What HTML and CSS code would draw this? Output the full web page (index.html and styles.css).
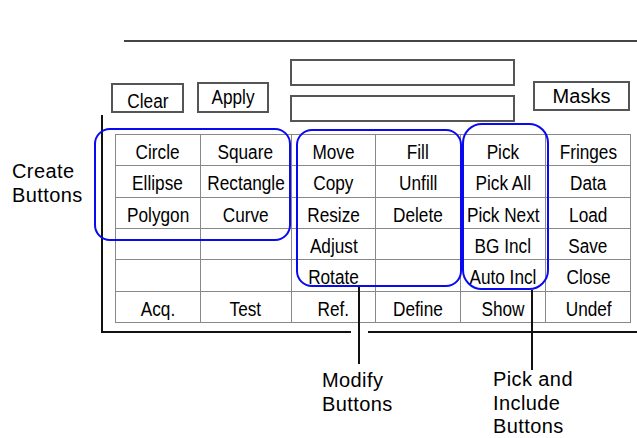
FILE: index.html
```html
<!DOCTYPE html>
<html>

<head>
    <meta charset="UTF-8">
    <title>Mask Editor Buttons</title>
    <link rel="stylesheet" href="styles.css">
</head>

<body>
    <div id="page">
        <div class="rule"></div>

        <div class="controls">
            <div class="btn btnClear"><span class="narrow">Clear</span></div>
            <div class="btn btnApply"><span class="narrow">Apply</span></div>
            <div class="fields">
                <div class="field"></div>
                <div class="field"></div>
            </div>
            <div class="btn btnMasks">Masks</div>
        </div>

        <div class="frame">
            <div class="buttonGrid">
                <div class="cell"><span class="narrow">Circle</span></div>
                <div class="cell"><span class="narrow">Square</span></div>
                <div class="cell"><span class="narrow">Move</span></div>
                <div class="cell"><span class="narrow">Fill</span></div>
                <div class="cell"><span class="narrow">Pick</span></div>
                <div class="cell"><span class="narrow">Fringes</span></div>

                <div class="cell"><span class="narrow">Ellipse</span></div>
                <div class="cell"><span class="narrow">Rectangle</span></div>
                <div class="cell"><span class="narrow">Copy</span></div>
                <div class="cell"><span class="narrow">Unfill</span></div>
                <div class="cell"><span class="narrow">Pick All</span></div>
                <div class="cell"><span class="narrow">Data</span></div>

                <div class="cell"><span class="narrow">Polygon</span></div>
                <div class="cell"><span class="narrow">Curve</span></div>
                <div class="cell"><span class="narrow">Resize</span></div>
                <div class="cell"><span class="narrow">Delete</span></div>
                <div class="cell"><span class="narrow">Pick Next</span></div>
                <div class="cell"><span class="narrow">Load</span></div>

                <div class="cell"></div>
                <div class="cell"></div>
                <div class="cell"><span class="narrow">Adjust</span></div>
                <div class="cell"></div>
                <div class="cell"><span class="narrow">BG Incl</span></div>
                <div class="cell"><span class="narrow">Save</span></div>

                <div class="cell"></div>
                <div class="cell"></div>
                <div class="cell"><span class="narrow">Rotate</span></div>
                <div class="cell"></div>
                <div class="cell"><span class="narrow">Auto Incl</span></div>
                <div class="cell"><span class="narrow">Close</span></div>

                <div class="cell"><span class="narrow">Acq.</span></div>
                <div class="cell"><span class="narrow">Test</span></div>
                <div class="cell"><span class="narrow">Ref.</span></div>
                <div class="cell"><span class="narrow">Define</span></div>
                <div class="cell"><span class="narrow">Show</span></div>
                <div class="cell"><span class="narrow">Undef</span></div>
            </div>
        </div>

        <!-- annotations drawn over the panel -->
        <div class="group groupCreate"></div>
        <div class="group groupModify"></div>
        <div class="group groupPick"></div>

        <div class="frameGap"></div>
        <div class="leader leaderModify"></div>
        <div class="leader leaderPick"></div>

        <div class="label labelCreate">Create<br>Buttons</div>
        <div class="label labelModify">Modify<br>Buttons</div>
        <div class="label labelPick">Pick and<br>Include<br>Buttons</div>
    </div>
</body>

</html>
```

FILE: styles.css
```css
body {
    margin: 0;
    background-color: #FFFFFF;
    font-family: "Liberation Sans", Arial, sans-serif;
    color: #000000;
}

#page {
    position: relative;
    width: 637px;
    height: 438px;
    overflow: hidden;
}

.rule {
    margin-top: 40px;
    margin-left: 124px;
    height: 2px;
    background-color: #444444;
}

.controls {
    display: flex;
    align-items: flex-start;
    margin-top: 17px;
}

.btn {
    box-sizing: border-box;
    border: 2px solid #555555;
    font-size: 20px;
    text-align: center;
    line-height: 22px;
}

.btnClear {
    width: 73px;
    height: 30px;
    margin-left: 111px;
    margin-top: 24px;
    padding-top: 5px;
}

.btnApply {
    width: 72px;
    height: 31px;
    margin-left: 13px;
    margin-top: 23px;
    padding-top: 2px;
}

.btnMasks {
    width: 97px;
    height: 30px;
    margin-left: 18px;
    margin-top: 22px;
    padding-top: 2px;
}

.fields {
    display: flex;
    flex-direction: column;
    gap: 9px;
    margin-left: 21px;
}

.field {
    box-sizing: border-box;
    width: 225px;
    height: 27px;
    border: 2px solid #555555;
}

.narrow {
    display: inline-block;
    transform: scaleX(0.86);
    white-space: nowrap;
}

.frame {
    margin-top: -7px;
    margin-left: 101px;
    padding: 19px 0 8px 12px;
    border-left: 2px solid #111111;
    border-bottom: 2px solid #111111;
}

.buttonGrid {
    display: grid;
    grid-template-columns: repeat(6, 1fr);
    grid-template-rows: repeat(6, 1fr);
    gap: 1px;
    width: 514px;
    height: 187px;
    padding: 1px;
    background-color: #888888;
}

.cell {
    display: flex;
    justify-content: center;
    align-items: center;
    padding-top: 4px;
    background-color: #FFFFFF;
    font-size: 20px;
    line-height: 20px;
    overflow: visible;
}

.group {
    position: absolute;
    box-sizing: border-box;
    border: 2px solid #0A0AF0;
    border-radius: 16px;
}

.groupCreate {
    left: 94px;
    top: 128px;
    width: 197px;
    height: 113px;
}

.groupModify {
    left: 296px;
    top: 129px;
    width: 166px;
    height: 158px;
}

.groupPick {
    left: 462px;
    top: 123px;
    width: 87px;
    height: 167px;
    border-radius: 20px;
}

.frameGap {
    position: absolute;
    left: 351px;
    top: 328px;
    width: 17px;
    height: 8px;
    background-color: #FFFFFF;
}

.leader {
    position: absolute;
    width: 2px;
    background-color: #111111;
}

.leaderModify {
    left: 358px;
    top: 287px;
    height: 77px;
}

.leaderPick {
    left: 531px;
    top: 290px;
    height: 80px;
}

.label {
    position: absolute;
    font-size: 20px;
    line-height: 23.5px;
    letter-spacing: 0.4px;
}

.labelCreate {
    left: 12px;
    top: 160px;
}

.labelModify {
    left: 322px;
    top: 369px;
}

.labelPick {
    left: 493px;
    top: 368px;
}
```
